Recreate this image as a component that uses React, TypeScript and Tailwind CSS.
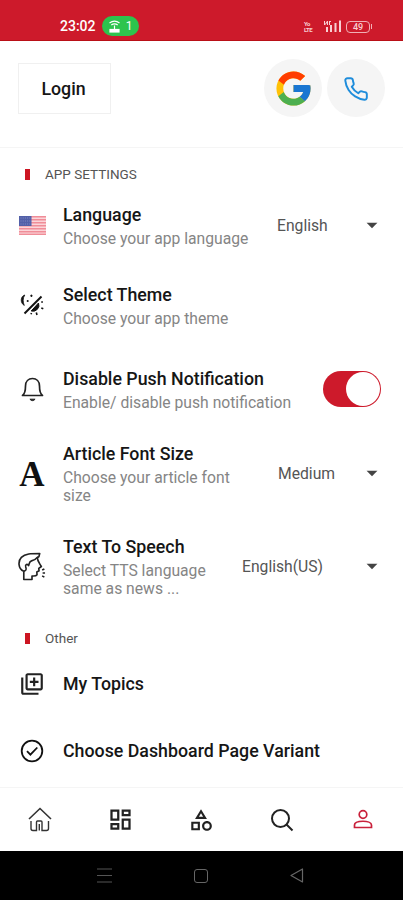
import type { ReactNode } from "react";
import { FcGoogle } from "react-icons/fc";
import { FiPhone } from "react-icons/fi";
import {
  MdArrowDropDown,
  MdOutlineCategory,
  MdOutlineDashboard,
  MdOutlineLibraryAdd,
} from "react-icons/md";

function FlagIcon() {
  return (
    <svg width="27" height="19" viewBox="0 0 27 19">
      <rect width="27" height="19" rx="1" fill="#fbd5d9" />
      {[0, 3, 6, 9, 12, 15, 17.6].map((y) => (
        <rect key={y} y={y} width="27" height="1.5" fill="#f08d98" />
      ))}
      <rect width="12.5" height="10" fill="#5260a8" />
      {[2, 5, 8].map((y) => (
        <path key={y} d={`M1.5 ${y}h10`} stroke="#8790c8" strokeWidth="0.9" strokeDasharray="1 1.2" />
      ))}
    </svg>
  );
}

function ThemeIcon() {
  return (
    <svg width="24" height="24" viewBox="0 0 24 24" fill="none" stroke="#111">
      <path d="M21.5 3.5 4.5 20.5" strokeWidth="1.9" />
      <path d="M4.8 2C.5 3 -.2 10 4.300 12.400 2.700 9.400 2.700 4.900 4.800 2Z" fill="#111" strokeWidth="0.8" />
      <path d="M11.4 1.6v2.400M10.200 2.800h2.400M7.700 7v2M6.700 8h2" strokeWidth="1" />
      <path d="M18.500 10a6 6 0 0 1-7.300 8Z" fill="#111" />
      <path d="M21.3 9.200l1.500-.5M21.300 15l2 .8M16.300 19.500l.7 2.500M11.500 20l-.5 1.300" strokeWidth="1.6" />
    </svg>
  );
}

function BellIcon() {
  return (
    <svg width="23" height="25" viewBox="0 0 23 25" fill="none" stroke="#222" strokeWidth="1.7">
      <path d="M1.5 18.5C4.3 16.5 4.5 13 4.5 9c0-4.700 3-7.500 7-7.500s7 2.800 7 7.500c0 4 .2 7.500 3 9.500Z" strokeLinejoin="round" />
      <path d="M8.9 22.200c1.400 1.900 3.800 1.900 5.200 0Z" fill="#222" strokeWidth="1" />
    </svg>
  );
}

function SpeechIcon() {
  return (
    <svg width="29" height="29" viewBox="0 0 29 29" fill="none" stroke="#222" strokeWidth="1.7" strokeLinejoin="round">
      <path d="M6 28v-8.500C-.2 17 0 8.500 3.500 5 7.500 1 13.500 1 22.500 1l-.9 3.500-1.600.8c0 3.700 2.500 6.200 4.200 9.200l-2.700 2 .3 2.500-2.300 1.200.2 2.800c-1.200 1.800-3.400 1.300-5.200 1.300V28Z" />
      <path d="M6 19.500c3.300-1.200 2.700-2.500 2-4.500-.8-2.800 1.700-3.500 3-1.500.8-2 .5-4.200 3-4.800 2.800-.7 4.700-1.700 6.800-4.200" />
      <path d="m25 18.200 2.300-1.200M25.500 21.200h2.500M25 24.200l2.300 1.300" />
    </svg>
  );
}

function CheckIcon() {
  return (
    <svg width="24" height="24" viewBox="0 0 24 24" fill="none" stroke="#111" strokeWidth="1.8">
      <circle cx="12" cy="12" r="10.3" />
      <path d="m7 12.200 3.400 3.500L17.300 8.500" />
    </svg>
  );
}

function HomeIcon() {
  return (
    <svg width="24" height="25" viewBox="0 0 24 25" fill="none" stroke="#333" strokeWidth="1.4">
      <path d="M1 12 12 1.500 23 12" strokeWidth="1.6" />
      <path d="M3 14v7.500q0 2 2 2h3.500V15q0-1 1-1h3.500q1 0 1 1v8.500h4.500q2 0 2-2V14M11.300 17v6.500" />
    </svg>
  );
}

function SignalIcon() {
  return (
    <svg width="19" height="13" viewBox="0 0 19 13" fill="#f8cfd3">
      <path d="M1 1h1v3l2-3h1v4H4V3L2 5H1ZM6 1h2v1H7v3H6ZM3 7h2v5H3ZM7 5h2v7H7ZM11.500 3h2v9h-2ZM16 .500h2V12h-2Z" />
    </svg>
  );
}

function Row(props: {
  icon: ReactNode;
  title: string;
  sub?: string;
  className: string;
  subClass?: string;
  children?: ReactNode;
}) {
  return (
    <div className={`flex items-center ${props.className}`}>
      <div className="w-7 mr-[17px] flex justify-center shrink-0">{props.icon}</div>
      <div className="shrink-0">
        <p className="font-medium text-[17.8px] leading-6 text-[#161616] whitespace-nowrap">{props.title}</p>
        {props.sub && (
          <p className={`mt-[3px] text-[15.7px] leading-[18px] text-[#858585] ${props.subClass || "whitespace-nowrap"}`}>
            {props.sub}
          </p>
        )}
      </div>
      {props.children}
    </div>
  );
}

function Select(props: { value: string; className: string }) {
  return (
    <div className={`ml-auto flex items-center justify-between shrink-0 text-[#555] ${props.className}`}>
      <span className="text-[15.7px] pt-px">{props.value}</span>
      <MdArrowDropDown size={26} color="#444" />
    </div>
  );
}

function SectionTitle(props: { text: string; className: string }) {
  return (
    <div className={`flex items-center ml-[7px] ${props.className}`}>
      <span className="w-[5px] h-[11px] bg-[#cc1522] mr-[15px]"></span>
      <span className="text-[13.5px] text-[#555]">{props.text}</span>
    </div>
  );
}

function App() {
  return (
    <div className="h-[900px] w-full flex flex-col bg-white overflow-hidden font-['Roboto',sans-serif]">
      <div className="h-[41px] shrink-0 bg-[#cd1a2b] border-b border-[#b90f17] flex items-start pt-4 pl-[60px] pr-[31px]">
        <span className="text-white text-[14px] leading-[21px] font-medium w-[36px] whitespace-nowrap">23:02</span>
        <div className="ml-[6px] w-[37px] h-[20px] rounded-full bg-[#2dc44d] flex items-center justify-center gap-[6px] text-white text-[12px]">
          <svg width="11" height="13" viewBox="0 0 11 13" fill="none" stroke="white" strokeWidth="1.2">
            <path d="M.5 3Q5.500-.8 10.500 3M2.300 5Q5.500 2.700 8.700 5M5.500 5.500v4" />
            <rect x="1" y="9.5" width="9" height="2.5" fill="white" />
          </svg>
          1
        </div>
        <div className="ml-auto flex items-center h-[21px]">
          <div className="w-[9px] flex flex-col text-[#f8cfd3] text-[6px] leading-[6px] font-bold mr-[10px] tracking-[-0.5px]">
            <span>Yo</span>
            <span>LTE</span>
          </div>
          <SignalIcon />
          <div className="ml-[4px] w-[24px] h-[12px] rounded-[4px] border border-[#f0b0b6] text-[#f8cfd3] text-[9px] leading-[10px] font-medium text-center">
            49
          </div>
          <span className="w-px h-[5px] ml-px bg-[#f0b0b6]"></span>
        </div>
      </div>

      <div className="h-[107px] shrink-0 border-b border-[#f5f5f5] flex items-start pl-[18px] pr-[18px]">
        <button className="mt-[22px] w-[93px] h-[51px] pt-[2px] pr-[2px] border border-[#f0f0f0] text-[17.8px] font-medium text-[#161616]">
          Login
        </button>
        <div className="ml-auto mt-[18px] flex gap-[5px]">
          <div className="size-[58px] rounded-full bg-[#f5f5f5] flex items-center justify-center">
            <FcGoogle size={41} />
          </div>
          <div className="size-[58px] rounded-full bg-[#f5f5f5] flex items-center justify-center pt-[2px]">
            <FiPhone size={26} color="#1f8ddb" strokeWidth={1.8} />
          </div>
        </div>
      </div>

      <div className="h-[639px] shrink-0 px-[18px] overflow-hidden">
        <SectionTitle text="APP SETTINGS" className="h-[53px]" />
        <Row icon={<FlagIcon />} title="Language" sub="Choose your app language" className="h-[48px]">
          <Select value="English" className="w-[108px]" />
        </Row>
        <Row icon={<ThemeIcon />} title="Select Theme" sub="Choose your app theme" className="h-[50px] mt-[31px]" />
        <Row
          icon={<BellIcon />}
          title="Disable Push Notification"
          sub="Enable/ disable push notification"
          className="h-[50px] mt-[34px]"
        >
          <div className="ml-auto mr-[4px] w-[58px] h-[36px] rounded-full bg-[#cd1a2b] p-px flex justify-end items-center shrink-0">
            <div className="size-[34px] rounded-full bg-white"></div>
          </div>
        </Row>
        <Row
          icon={<span className="pt-[4px] font-['Liberation_Serif',serif] font-bold text-[35px] leading-6 text-[#111]">A</span>}
          title="Article Font Size"
          sub="Choose your article font size"
          subClass="w-[175px]"
          className="h-[64px] mt-[27px]"
        >
          <Select value="Medium" className="w-[107px]" />
        </Row>
        <Row
          icon={<SpeechIcon />}
          title="Text To Speech"
          sub="Select TTS language same as news ..."
          subClass="w-[150px]"
          className="h-[64px] mt-[29px]"
        >
          <Select value="English(US)" className="w-[143px]" />
        </Row>
        <SectionTitle text="Other" className="h-[20px] mt-[30px]" />
        <Row icon={<MdOutlineLibraryAdd size={26} color="#222" />} title="My Topics" className="h-6 mt-6" />
        <Row icon={<CheckIcon />} title="Choose Dashboard Page Variant" className="h-6 mt-[43px]" />
      </div>

      <div className="h-16 shrink-0 border-t border-[#f5f5f5] grid grid-cols-5 place-items-center text-[#222]">
        <HomeIcon />
        <MdOutlineDashboard size={27} />
        <MdOutlineCategory size={26} />
        <svg width="24" height="24" viewBox="0 0 24 24" fill="none" stroke="#222" strokeWidth="2">
          <circle cx="10.5" cy="10.5" r="8.500" />
          <path d="m16.500 16.500 6 6" />
        </svg>
        <svg width="20" height="21" viewBox="0 0 20 21" fill="none" stroke="#c9203a" strokeWidth="1.7">
          <circle cx="10" cy="5.5" r="3.8" />
          <path d="M1.500 18.500V16c0-5 17-5 17 0v2.500Z" />
        </svg>
      </div>

      <div className="h-[49px] shrink-0 bg-black flex items-center justify-between pl-[97px] pr-[99px]">
        <svg width="15" height="15" viewBox="0 0 15 15" stroke="#555" strokeWidth="1.2">
          <path d="M0 1h15M0 7.500h15M0 14h15" />
        </svg>
        <span className="size-[14px] rounded-[3px] border border-[#666]"></span>
        <svg width="14" height="15" viewBox="0 0 14 15" fill="none" stroke="#666" strokeWidth="1.2">
          <path d="M12.500 1v13L1 7.500Z" strokeLinejoin="round" />
        </svg>
      </div>
    </div>
  );
}
export default App;
